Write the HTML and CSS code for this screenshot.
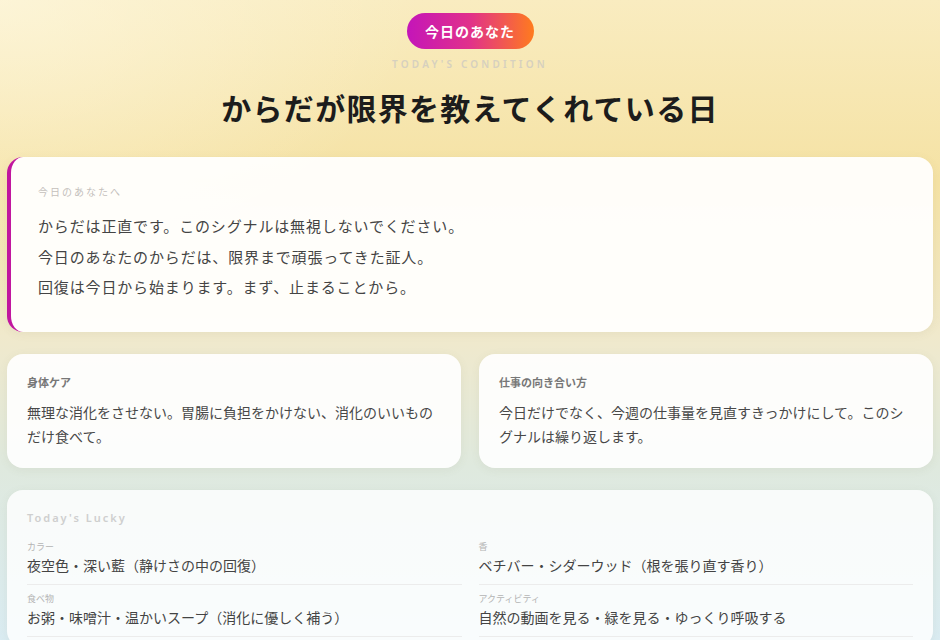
FILE: index.html
```html
<!DOCTYPE html>
<html lang="ja">
<head>
<meta charset="utf-8">
<title>今日のあなた</title>
<link rel="stylesheet" href="styles.css">
</head>
<body>
<div class="page">
  <header class="hero">
    <div class="pill">今日のあなた</div>
    <div class="eyebrow">TODAY'S CONDITION</div>
    <h1 class="title">からだが限界を教えてくれている日</h1>
  </header>

  <section class="card message">
    <div class="message-label">今日のあなたへ</div>
    <p class="message-body">からだは正直です。このシグナルは無視しないでください。<br>今日のあなたのからだは、限界まで頑張ってきた証人。<br>回復は今日から始まります。まず、止まることから。</p>
  </section>

  <div class="pair">
    <section class="card tip">
      <h2 class="tip-title">身体ケア</h2>
      <p class="tip-body">無理な消化をさせない。胃腸に負担をかけない、消化のいいものだけ食べて。</p>
    </section>
    <section class="card tip">
      <h2 class="tip-title">仕事の向き合い方</h2>
      <p class="tip-body">今日だけでなく、今週の仕事量を見直すきっかけにして。このシグナルは繰り返します。</p>
    </section>
  </div>

  <section class="card lucky">
    <div class="lucky-title">Today's Lucky</div>
    <div class="lucky-grid">
      <div class="lucky-item">
        <div class="lucky-label">カラー</div>
        <div class="lucky-value">夜空色・深い藍（静けさの中の回復）</div>
      </div>
      <div class="lucky-item">
        <div class="lucky-label">香</div>
        <div class="lucky-value">ベチバー・シダーウッド（根を張り直す香り）</div>
      </div>
      <div class="lucky-item">
        <div class="lucky-label">食べ物</div>
        <div class="lucky-value">お粥・味噌汁・温かいスープ（消化に優しく補う）</div>
      </div>
      <div class="lucky-item">
        <div class="lucky-label">アクティビティ</div>
        <div class="lucky-value">自然の動画を見る・緑を見る・ゆっくり呼吸する</div>
      </div>
    </div>
  </section>
</div>
</body>
</html>
```

FILE: styles.css
```css
html, body {
  margin: 0;
  padding: 0;
}
body {
  min-height: 100vh;
  font-family: "Noto Sans CJK JP", "Noto Sans", sans-serif;
  color: #444;
  background:
    radial-gradient(ellipse 420px 260px at 0% 0%, rgba(255, 250, 230, 0.6), rgba(255, 250, 230, 0) 100%),
    linear-gradient(180deg, #f9ecc0 0%, #f5e2a4 28%, #f0e9cc 52%, #dfe9de 72%, #daecf3 100%);
}
.page {
  padding: 13px 7px 0;
  display: flex;
  flex-direction: column;
}
.hero {
  display: flex;
  flex-direction: column;
  align-items: center;
}
.pill {
  height: 36px;
  width: 127px;
  box-sizing: border-box;
  border-radius: 18px;
  display: flex;
  align-items: center;
  justify-content: center;
  color: #fff;
  font-size: 14px;
  font-weight: 700;
  letter-spacing: 1px;
  background: linear-gradient(90deg, #c415b9 0%, #e1318a 50%, #ff7b1e 100%);
}
.eyebrow {
  margin-top: 9px;
  font-family: "Noto Sans", sans-serif;
  font-size: 10px;
  line-height: 12px;
  font-weight: 600;
  letter-spacing: 3.2px;
  color: #d6d0bf;
}
.title {
  margin: 16px 0 0;
  font-size: 30px;
  line-height: 42px;
  font-weight: 700;
  letter-spacing: 1.3px;
  color: #1c1c1c;
}
.card {
  background: rgba(255, 255, 255, 0.9);
  border-radius: 16px;
  box-shadow: 0 2px 10px rgba(120, 110, 80, 0.08);
  box-sizing: border-box;
}
.message {
  margin-top: 29px;
  border-left: 4px solid #c1169f;
  padding: 28px 28px 29px 27px;
  background: rgba(255, 254, 252, 0.97);
}
.message-label {
  font-size: 10px;
  line-height: 14px;
  letter-spacing: 2px;
  color: #c4c0bc;
}
.message-body {
  margin: 12px 0 0;
  font-size: 15px;
  line-height: 30.5px;
  letter-spacing: 0.85px;
  color: #444;
}
.pair {
  margin-top: 22px;
  display: grid;
  grid-template-columns: 1fr 1fr;
  column-gap: 18px;
}
.tip {
  padding: 20px 20px;
  min-height: 114px;
}
.tip-title {
  margin: 0;
  font-size: 11px;
  line-height: 16px;
  font-weight: 700;
  color: #777;
}
.tip-body {
  margin: 10px 0 0;
  font-size: 14px;
  line-height: 24px;
  color: #484848;
}
.lucky {
  margin-top: 22px;
  padding: 20px 20px 10px;
  background: rgba(255, 255, 255, 0.82);
}
.lucky-title {
  font-family: "Noto Sans", sans-serif;
  font-size: 11px;
  line-height: 16px;
  font-weight: 600;
  letter-spacing: 2px;
  color: #cfcfcf;
}
.lucky-grid {
  margin-top: 7px;
  display: grid;
  grid-template-columns: 1fr 1fr;
  column-gap: 17px;
}
.lucky-item {
  padding: 7px 0 8px;
  border-bottom: 1px solid #ececec;
}
.lucky-label {
  font-size: 9px;
  line-height: 14px;
  color: #b4b4b4;
}
.lucky-value {
  font-size: 14px;
  line-height: 22px;
  color: #444;
}
```
